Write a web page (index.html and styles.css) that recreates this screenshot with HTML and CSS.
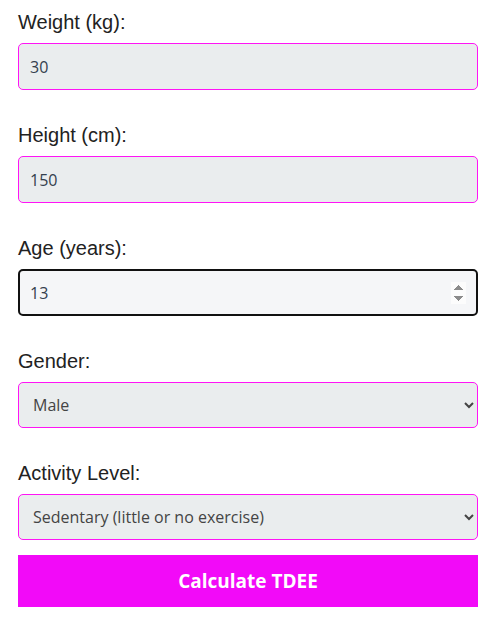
FILE: index.html
```html
<!DOCTYPE html>
<html lang="en">
<head>
    <meta charset="UTF-8">
    <meta name="viewport" content="width=device-width, initial-scale=1.0">
    <title>TDEE Calculator</title>
    <link rel="stylesheet" href="styles.css">
</head>
<body>
    <form class="tdee-form">
        <div class="form-group">
            <label for="weight">Weight (kg):</label>
            <input type="number" id="weight" class="form-control" value="30">
        </div>

        <div class="form-group">
            <label for="height">Height (cm):</label>
            <input type="number" id="height" class="form-control" value="150">
        </div>

        <div class="form-group">
            <label for="age">Age (years):</label>
            <input type="number" id="age" class="form-control" value="13" autofocus>
        </div>

        <div class="form-group">
            <label for="gender">Gender:</label>
            <select id="gender" class="form-control form-select">
                <option>Male</option>
                <option>Female</option>
            </select>
        </div>

        <div class="form-group">
            <label for="activity">Activity Level:</label>
            <select id="activity" class="form-control form-select">
                <option>Sedentary (little or no exercise)</option>
                <option>Lightly active</option>
                <option>Moderately active</option>
                <option>Very active</option>
            </select>
        </div>

        <button type="button" class="btn-calc">Calculate TDEE</button>
    </form>
</body>
</html>
```

FILE: styles.css
```css
body {
    margin: 0;
    font-family: "Liberation Sans", Arial, sans-serif;
    background-color: #fff;
    color: #222;
}

.tdee-form {
    padding: 11px 13px 0 18px;
}

.form-group {
    display: flex;
    flex-direction: column;
    margin-bottom: 34px;
}

.form-group:last-of-type {
    margin-bottom: 15px;
}

.form-group label {
    font-size: 20px;
    line-height: 23px;
    margin-bottom: 9px;
}

.form-control {
    box-sizing: border-box;
    width: 100%;
    height: 47px;
    padding: 0 11px;
    font-family: "Open Sans", sans-serif;
    font-size: 16px;
    color: #34404d;
    background-color: #eaedee;
    border: 1px solid #ff14f5;
    border-radius: 5px;
    outline: none;
}

.form-control:focus {
    background-color: #f5f6f8;
    border: 2px solid #111;
    padding: 0 10px;
}

.form-select {
    height: 46px;
    padding: 0 10px;
    color: #444;
}

.btn-calc {
    display: block;
    width: 100%;
    height: 52px;
    border: none;
    background-color: #f20af8;
    color: #fff;
    font-family: "Open Sans", sans-serif;
    font-size: 19px;
    font-weight: bold;
    cursor: pointer;
}
```
